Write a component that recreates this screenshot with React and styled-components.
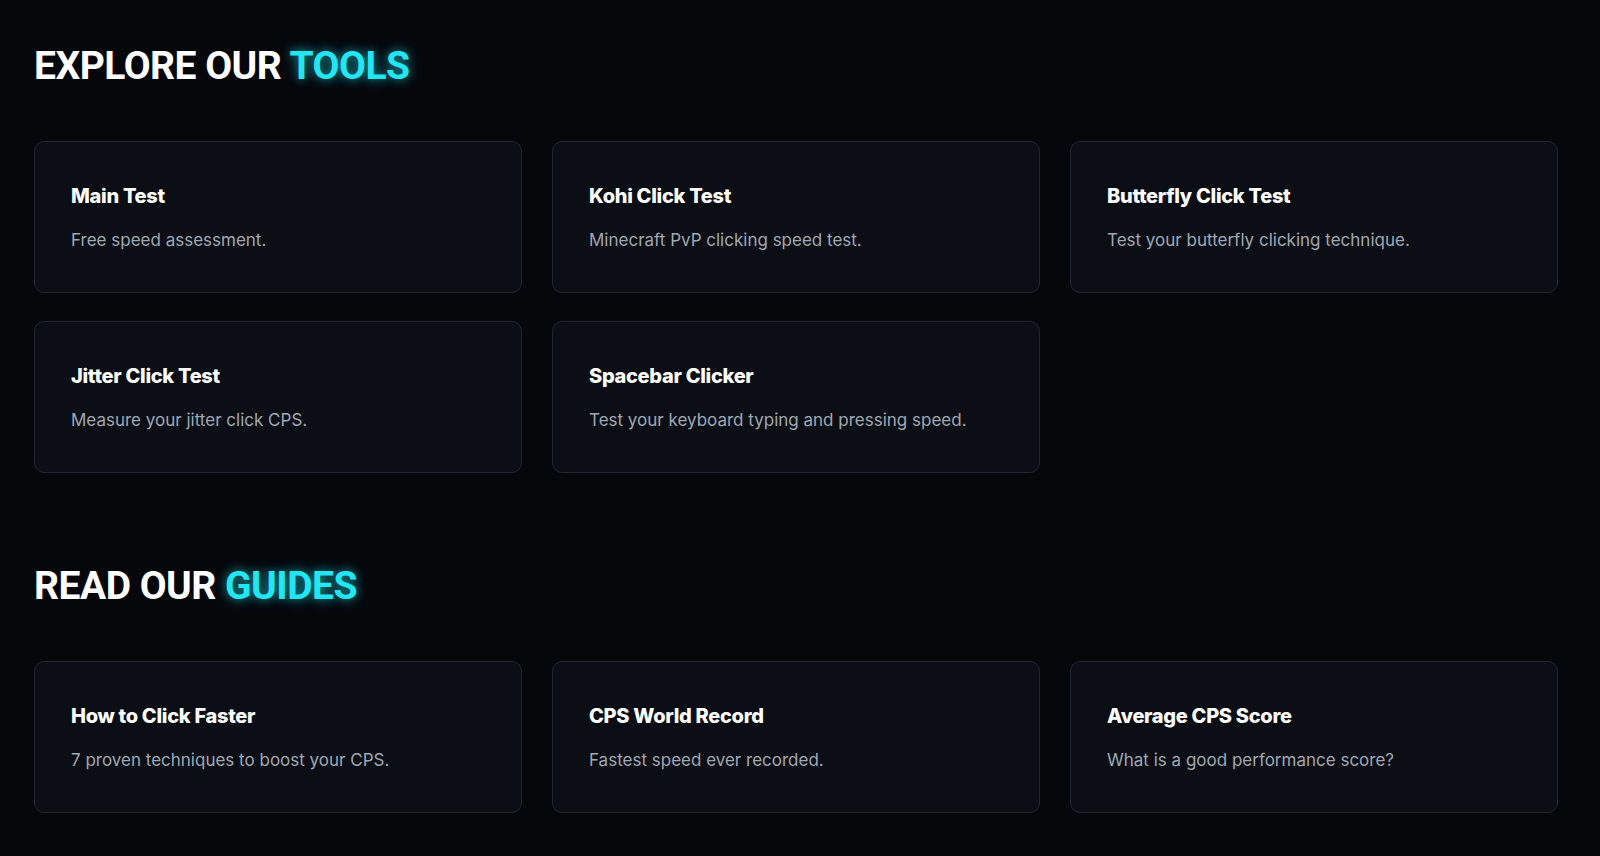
import React from 'react';
import styled, { createGlobalStyle } from 'styled-components';

const tools = [
    { title: 'Main Test', text: 'Free speed assessment.' },
    { title: 'Kohi Click Test', text: 'Minecraft PvP clicking speed test.' },
    { title: 'Butterfly Click Test', text: 'Test your butterfly clicking technique.' },
    { title: 'Jitter Click Test', text: 'Measure your jitter click CPS.' },
    { title: 'Spacebar Clicker', text: 'Test your keyboard typing and pressing speed.' },
];

const guides = [
    { title: 'How to Click Faster', text: '7 proven techniques to boost your CPS.' },
    { title: 'CPS World Record', text: 'Fastest speed ever recorded.' },
    { title: 'Average CPS Score', text: 'What is a good performance score?' },
];

const Section = ({ lead, accent, items }) => (
    <Block>
        <Heading>
            {lead} <Accent>{accent}</Accent>
        </Heading>
        <Grid>
            {items.map((item) => (
                <Card key={item.title} href="#">
                    <CardTitle>{item.title}</CardTitle>
                    <CardText>{item.text}</CardText>
                </Card>
            ))}
        </Grid>
    </Block>
);

const App = () => {
    return (
        <>
            <GlobalStyle />
            <Page>
                <Section lead="EXPLORE OUR" accent="TOOLS" items={tools} />
                <Section lead="READ OUR" accent="GUIDES" items={guides} />
            </Page>
        </>
    );
};

const GlobalStyle = createGlobalStyle`
    html, body {
        margin: 0;
        padding: 0;
        background: #06070b;
    }
    * {
        box-sizing: border-box;
    }
`;

const Page = styled.main`
    min-height: 100vh;
    padding: 43px 42px 41px 34px;
    display: flex;
    flex-direction: column;
    gap: 90px;
    background: #06070b;
    font-family: Inter, "Liberation Sans", sans-serif;
`;

const Block = styled.section`
    display: flex;
    flex-direction: column;
    gap: 51px;
`;

const Heading = styled.h2`
    margin: 0;
    font-family: Roboto, "Liberation Sans", sans-serif;
    font-size: 39px;
    line-height: 1.2;
    font-weight: 700;
    letter-spacing: -0.5px;
    color: #ffffff;
`;

const Accent = styled.span`
    color: #22e6f2;
    text-shadow: 0 0 10px rgba(34, 230, 242, 0.55), 0 0 18px rgba(34, 230, 242, 0.3);
`;

const Grid = styled.div`
    display: grid;
    grid-template-columns: repeat(3, 1fr);
    column-gap: 30px;
    row-gap: 28px;
`;

const Card = styled.a`
    display: flex;
    flex-direction: column;
    gap: 20px;
    height: 152px;
    padding: 42px 36px 40px;
    background: #0b0e14;
    border: 1px solid #202733;
    border-radius: 10px;
    text-decoration: none;
`;

const CardTitle = styled.div`
    font-size: 20px;
    line-height: 24px;
    font-weight: 800;
    letter-spacing: -0.3px;
    color: #ffffff;
`;

const CardText = styled.div`
    font-size: 17px;
    line-height: 24px;
    color: #a0a8b3;
`;

export default App;
